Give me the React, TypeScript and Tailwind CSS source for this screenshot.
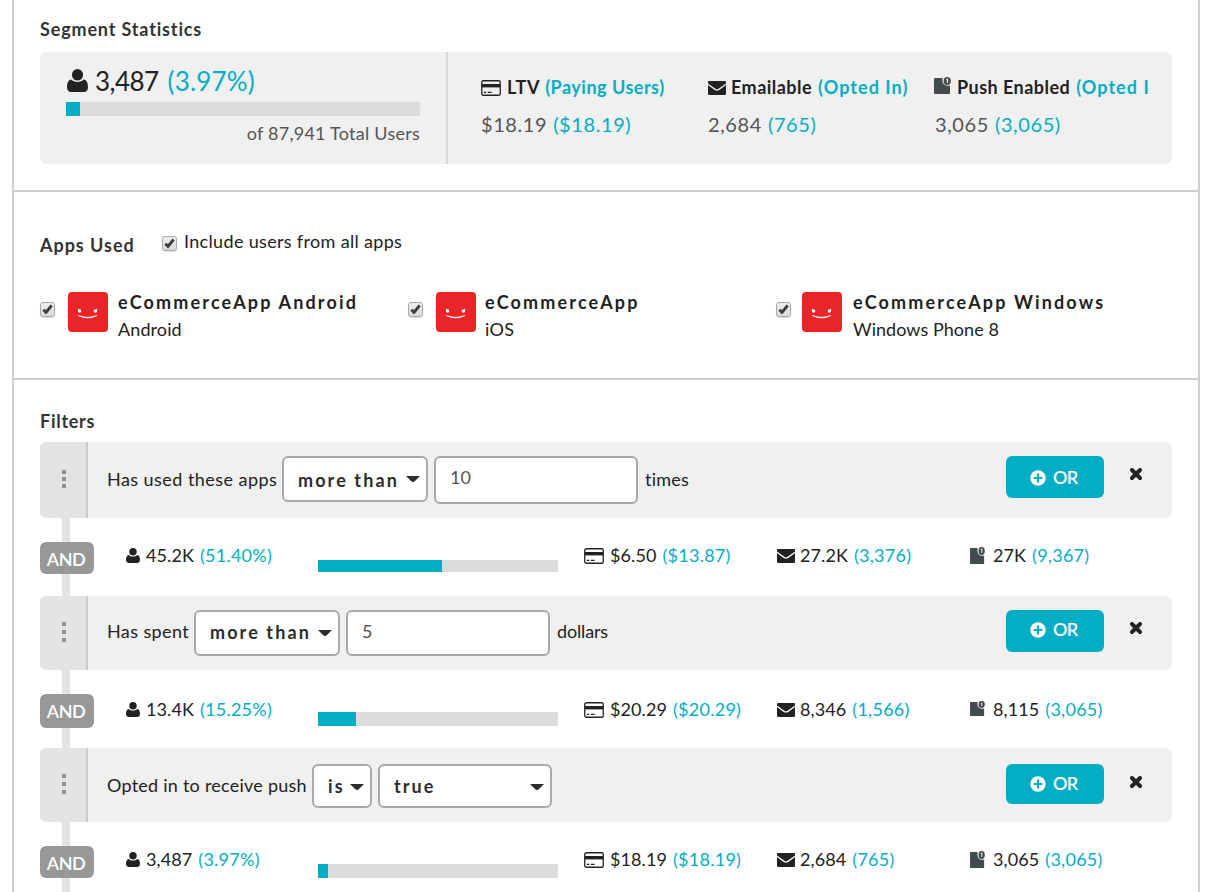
type IconProps = { className?: string };

function UserIcon({ className = "" }: IconProps) {
  return (
    <svg className={className} viewBox="0 0 21 23" preserveAspectRatio="none" fill="#222">
      <path d="M4.200 10.600C2 10.600 0 13.400 0 18.200 0 21.400 1.600 23 4.200 23H16.800C19.400 23 21 21.400 21 18.200 21 13.400 19 10.600 16.800 10.600 15.300 12.100 13 13 10.500 13S5.700 12.100 4.200 10.600Z" />
      <ellipse cx="10.5" cy="5.8" rx="5.6" ry="5.8" />
    </svg>
  );
}

function CardIcon({ className = "" }: IconProps) {
  return (
    <svg className={className} viewBox="0 0 20 16" preserveAspectRatio="none">
      <rect x="0.75" y="0.75" width="18.5" height="14.5" rx="1.6" fill="none" stroke="#222" strokeWidth="1.3" />
      <rect x="1" y="4" width="18" height="3.4" fill="#222" />
      <path d="M2.800 12.400H5.200M6.800 12.400H10.600" stroke="#222" strokeWidth="1.200" />
    </svg>
  );
}

function MailIcon({ className = "" }: IconProps) {
  return (
    <svg className={className} viewBox="0 0 18 14" preserveAspectRatio="none" fill="#222">
      <path d="M1 0H17Q18 0 18 1V2.500L10.600 7.700Q9 8.700 7.400 7.700L0 2.500V1Q0 0 1 0Z" />
      <path d="M0 4.100 6.700 8.900Q9 10.300 11.300 8.900L18 4.100V12.500Q18 14 16.500 14H1.500Q0 14 0 12.500Z" />
    </svg>
  );
}

function PushIcon({ className = "" }: IconProps) {
  return (
    <svg className={className} viewBox="0 0 17 17" preserveAspectRatio="none">
      <path d="M1 1H8.600Q7.600 6 10.800 7.900 13.200 9.200 16 8.400V16Q16 17 15 17H1Q0 17 0 16V2Q0 1 1 1Z" fill="#434b4d" />
      <ellipse cx="13.200" cy="4" rx="3.600" ry="3.900" fill="#434b4d" />
      <path d="M12.300 2.900 13.400 2.200V5.900" fill="none" stroke="#f4f4f4" strokeWidth="1.100" />
    </svg>
  );
}

function PlusIcon({ className = "" }: IconProps) {
  return (
    <svg className={className} viewBox="0 0 16 16">
      <circle cx="8" cy="8" r="7.700" fill="#fff" />
      <path d="M8 3.600V12.400M3.600 8H12.400" stroke="#03aec4" strokeWidth="2.200" />
    </svg>
  );
}

function CloseIcon({ className = "" }: IconProps) {
  return (
    <svg className={className} viewBox="0 0 12 12">
      <path d="M2 2 10 10M10 2 2 10" stroke="#222" strokeWidth="3.900" strokeLinecap="round" />
    </svg>
  );
}

function Caret({ className = "" }: IconProps) {
  return (
    <svg className={className} viewBox="0 0 14 6" width="14" height="6">
      <path d="M0 0H14L9 5Q7 6.800 5 5Z" fill="#2d2d2d" />
    </svg>
  );
}

function AppLogo() {
  return (
    <svg className="h-10 w-10 shrink-0 rounded bg-[#e9252a]" viewBox="0 0 40 40">
      <circle cx="11.600" cy="19" r="1.700" fill="#fff" />
      <circle cx="27.400" cy="19" r="1.700" fill="#fff" />
      <path d="M10 23.400Q19.500 27 29 23.400 20 28.600 10 23.400Z" fill="#fff" stroke="#fff" strokeWidth="0.600" />
      <path d="M10.300 16.800 10.600 20M28.700 16.800 28.400 20" stroke="#fff" strokeWidth="0.900" />
    </svg>
  );
}

function Checkbox() {
  return (
    <span className="flex h-[15px] w-[15px] shrink-0 items-center justify-center rounded-[3px] border border-[#a9a9a9] bg-linear-to-b from-[#ededed] to-[#dadada] shadow-[0_1px_1px_rgba(0,0,0,0.12)]">
      <svg className="h-[11px] w-[11px]" viewBox="0 0 11 11">
        <path d="M1.400 5.800 4 8.400 9.600 1.500" fill="none" stroke="#3c3c3c" strokeWidth="2.900" />
      </svg>
    </span>
  );
}

const summary = [
  {
    icon: <CardIcon className="mt-[5px] mr-1.5 -ml-px h-4 w-5 shrink-0" />,
    label: "LTV",
    note: "(Paying Users)",
    value: "$18.19",
    sub: "($18.19)",
    width: "w-[226px]",
    labelTracking: "tracking-[0.7px]",
    noteTracking: "ml-[5px] tracking-[0.5px]",
    valueTracking: "-ml-px tracking-[0.58px]",
  },
  {
    icon: <MailIcon className="mt-[6px] mr-[5px] h-[14px] w-[18px] shrink-0" />,
    label: "Emailable",
    note: "(Opted In)",
    value: "2,684",
    sub: "(765)",
    width: "w-[227px]",
    labelTracking: "tracking-[0.47px]",
    noteTracking: "ml-[6px] tracking-[1.05px]",
    valueTracking: "tracking-[0.6px]",
  },
  {
    icon: <PushIcon className="mt-[2px] mr-1.5 -ml-px h-[17px] w-[17px] shrink-0" />,
    label: "Push Enabled",
    note: "(Opted In)",
    value: "3,065",
    sub: "(3,065)",
    width: "w-[214px]",
    labelTracking: "tracking-[0.46px]",
    noteTracking: "ml-[6px] tracking-[1.05px]",
    valueTracking: "tracking-[0.6px]",
  },
];

const apps = [
  { name: "eCommerceApp Android", platform: "Android", width: "w-[368px]", gap: "ml-[13px]", textGap: "ml-[10px]", tracking: "tracking-[0.1px]" },
  { name: "eCommerceApp", platform: "iOS", width: "w-[368px]", gap: "ml-[13px]", textGap: "ml-[9px]", tracking: "tracking-[0.3px]" },
  { name: "eCommerceApp Windows", platform: "Windows Phone 8", width: "w-[340px]", gap: "ml-[11px]", textGap: "ml-[11px]", tracking: "tracking-[0.05px]" },
];

type Field = { kind: "select" | "input"; value: string; width: string; box: string };

type Filter = {
  height: string;
  label: string;
  labelBox: string;
  fields: Field[];
  unit?: string;
  unitBox?: string;
  button: string;
  closeTop: string;
  dots: string;
  badge: string;
  textTop: string;
  bar: string;
  percent: number;
  pushIcon: string;
  stats: [string, string][];
};

const filters: Filter[] = [
  {
    height: "h-[76px]",
    label: "Has used these apps",
    labelBox: "mt-[25px] w-[175px] tracking-[0.45px]",
    fields: [
      { kind: "select", value: "more than", width: "w-[146px]", box: "mt-[14px] h-[46px] leading-[44px]" },
      { kind: "input", value: "10", width: "w-[204px]", box: "mt-[14px] h-[48px] leading-[38px]" },
    ],
    unit: "times",
    unitBox: "mt-[25px] tracking-[0.2px]",
    button: "mt-[14px] h-[42px] pt-[2px]",
    closeTop: "mt-[26px]",
    dots: "pt-[28px] gap-[3px]",
    badge: "h-[32px]",
    textTop: "pt-[25px]",
    bar: "h-[12px]",
    percent: 51.6,
    pushIcon: "h-[17px]",
    stats: [
      ["45.2K", "(51.40%)"],
      ["$6.50", "($13.87)"],
      ["27.2K", "(3,376)"],
      ["27K", "(9,367)"],
    ],
  },
  {
    height: "h-[74px]",
    label: "Has spent",
    labelBox: "mt-[23px] w-[87px] tracking-[0.4px]",
    fields: [
      { kind: "select", value: "more than", width: "w-[146px]", box: "mt-[14px] h-[46px] leading-[40px]" },
      { kind: "input", value: "5", width: "w-[204px]", box: "mt-[14px] h-[46px] leading-[38px]" },
    ],
    unit: "dollars",
    unitBox: "mt-[23px] tracking-[-0.15px]",
    button: "mt-[14px] h-[42px]",
    closeTop: "mt-[26px]",
    dots: "pt-[26px] gap-1",
    badge: "h-[34px]",
    textTop: "pt-[27px]",
    bar: "h-[14px]",
    percent: 15.8,
    pushIcon: "h-[15px]",
    stats: [
      ["13.4K", "(15.25%)"],
      ["$20.29", "($20.29)"],
      ["8,346", "(1,566)"],
      ["8,115", "(3,065)"],
    ],
  },
  {
    height: "h-[74px]",
    label: "Opted in to receive push",
    labelBox: "mt-[25px] w-[205px] tracking-[0.24px]",
    fields: [
      { kind: "select", value: "is", width: "w-[60px]", box: "mt-[16px] h-[44px] leading-[40px]" },
      { kind: "select", value: "true", width: "w-[174px]", box: "mt-[16px] h-[44px] leading-[40px]" },
    ],
    button: "mt-[16px] h-[40px]",
    closeTop: "mt-[28px]",
    dots: "pt-[26px] gap-1",
    badge: "h-[32px]",
    textTop: "pt-[25px]",
    bar: "h-[14px]",
    percent: 4.2,
    pushIcon: "h-[17px]",
    stats: [
      ["3,487", "(3.97%)"],
      ["$18.19", "($18.19)"],
      ["2,684", "(765)"],
      ["3,065", "(3,065)"],
    ],
  },
];

function Stat({ pair }: { pair: [string, string] }) {
  return (
    <>
      <span className="tracking-[0.1px]">{pair[0]}</span>
      <span className="ml-[6px] tracking-[0.25px] text-[#03aec4]">{pair[1]}</span>
    </>
  );
}

function FilterBlock({ filter }: { filter: Filter }) {
  return (
    <>
      <div className={`flex overflow-hidden rounded-md bg-[#f0f0f0] ${filter.height}`}>
        <div className={`flex w-12 shrink-0 flex-col border-r-2 border-[#cdcdcd] bg-[#e3e3e3] pl-[22px] ${filter.dots}`}>
          <span className="h-1 w-1 bg-[#919191]" />
          <span className="h-1 w-1 bg-[#919191]" />
          <span className="h-1 w-1 bg-[#919191]" />
        </div>
        <div className="flex grow items-start pl-[19px]">
          <span className={`leading-6 ${filter.labelBox}`}>{filter.label}</span>
          <div className="flex items-start gap-1.5">
            {filter.fields.map((f) =>
              f.kind === "select" ? (
                <div
                  key={f.value}
                  className={`flex items-start justify-between rounded-md border-2 border-[#a9a9a9] bg-white pr-[6px] pl-[14px] font-bold tracking-[2.1px] text-[#2d2d2d] ${f.width} ${f.box}`}
                >
                  {f.value}
                  <Caret className="mt-[18px] -ml-2 shrink-0" />
                </div>
              ) : (
                <div key={f.value} className={`rounded-md border-2 border-[#a9a9a9] bg-white pl-[14px] text-[#555] ${f.width} ${f.box}`}>
                  {f.value}
                </div>
              ),
            )}
          </div>
          {filter.unit && <span className={`ml-[7px] leading-6 ${filter.unitBox}`}>{filter.unit}</span>}
        </div>
        <button className={`flex w-[98px] shrink-0 items-start rounded-md bg-[#03aec4] pl-6 leading-[38px] font-semibold tracking-[-0.8px] text-white ${filter.button}`}>
          <PlusIcon className="mt-[12px] mr-[7px] h-4 w-4" />
          OR
        </button>
        <CloseIcon className={`mr-[30px] ml-[26px] h-3 w-3 shrink-0 ${filter.closeTop}`} />
      </div>

      <div className="flex h-[78px] items-start">
        <div className="flex h-full w-[54px] shrink-0 flex-col items-start">
          <span className="ml-[22px] h-6 w-2 bg-[#e3e3e3]" />
          <span className={`w-[54px] rounded-md bg-[#989898] pt-[2px] pr-[2px] text-center leading-[30px] font-semibold tracking-[-0.5px] text-white ${filter.badge}`}>AND</span>
          <span className="ml-[22px] w-2 grow bg-[#e3e3e3]" />
        </div>
        <div className={`ml-8 flex w-[192px] shrink-0 leading-6 ${filter.textTop}`}>
          <UserIcon className="mt-[5px] mr-[6px] h-[15px] w-[14px] shrink-0" />
          <Stat pair={filter.stats[0]} />
        </div>
        <div className={`mt-[42px] w-[240px] shrink-0 bg-[#dcdcdc] ${filter.bar}`}>
          <div className="h-full bg-[#03aec4]" style={{ width: `${filter.percent}%` }} />
        </div>
        <div className={`ml-[26px] flex leading-6 ${filter.textTop}`}>
          <div className="flex w-[193px]">
            <CardIcon className="mt-[5px] mr-[6px] h-4 w-5 shrink-0" />
            <Stat pair={filter.stats[1]} />
          </div>
          <div className="flex w-[193px]">
            <MailIcon className="mt-[6px] mr-[5px] h-[14px] w-[18px] shrink-0" />
            <Stat pair={filter.stats[2]} />
          </div>
          <div className="flex">
            <PushIcon className={`mt-[4px] mr-[8px] w-[15px] shrink-0 ${filter.pushIcon}`} />
            <Stat pair={filter.stats[3]} />
          </div>
        </div>
      </div>
    </>
  );
}

export default function App() {
  return (
    <div className="h-[892px] w-[1214px] overflow-hidden bg-white pl-3 font-['Lato',sans-serif] text-[18px] whitespace-nowrap text-[#222]">
      <main className="h-[920px] w-[1188px] border-x-2 border-[#cfcfcf]">
        <section className="h-[192px] border-b-2 border-[#cfcfcf] px-[26px] pt-[17px]">
          <h2 className="leading-6 font-bold tracking-[0.84px] text-[#333]">Segment Statistics</h2>
          <div className="mt-[11px] flex h-[112px] rounded-md bg-[#f0f0f0]">
            <div className="w-[408px] shrink-0 border-r-2 border-[#d8d8d8] pt-[13px] pr-[26px] pl-[26px]">
              <div className="flex text-[26px] leading-8">
                <UserIcon className="mt-[4px] mr-[7px] ml-px h-[23px] w-[21px]" />
                <span className="tracking-[-0.55px]">3,487</span>
                <span className="ml-[9px] tracking-[0.2px] text-[#03aec4]">(3.97%)</span>
              </div>
              <div className="mt-[5px] h-[14px] w-[354px] bg-[#dcdcdc]">
                <div className="h-full w-[14px] bg-[#03aec4]" />
              </div>
              <p className="mt-[5px] text-right leading-6 tracking-[0.25px] text-[#555]">of 87,941 Total Users</p>
            </div>
            <div className="flex pt-[23px] pl-[34px]">
              {summary.map((s) => (
                <div key={s.label} className={`-ml-px shrink-0 overflow-hidden pl-px leading-6 ${s.width} box-content`}>
                  <div className="flex font-bold">
                    {s.icon}
                    <span className={s.labelTracking}>{s.label}</span>
                    <span className={`text-[#03aec4] ${s.noteTracking}`}>{s.note}</span>
                  </div>
                  <div className={`mt-[13px] text-[20px] text-[#555] ${s.valueTracking}`}>
                    {s.value}
                    <span className="ml-[6px] text-[#03aec4]">{s.sub}</span>
                  </div>
                </div>
              ))}
            </div>
          </div>
        </section>

        <section className="h-[188px] border-b-2 border-[#cfcfcf] pt-[37px] pl-[26px]">
          <div className="flex items-start leading-6">
            <h2 className="mt-1 w-[122px] font-bold tracking-[0.97px] text-[#333]">Apps Used</h2>
            <div className="mt-[7px]">
              <Checkbox />
            </div>
            <span className="ml-[7px] tracking-[0.33px]">Include users from all apps</span>
          </div>
          <div className="mt-[30px] flex">
            {apps.map((a) => (
              <div key={a.name} className={`flex shrink-0 items-start ${a.width}`}>
                <div className="mt-[15px]">
                  <Checkbox />
                </div>
                <div className={`mt-[5px] ${a.gap}`}>
                  <AppLogo />
                </div>
                <div className={a.textGap}>
                  <div className="mt-px leading-7 font-bold tracking-[2.15px]">{a.name}</div>
                  <div className={`mt-px leading-6 ${a.tracking}`}>{a.platform}</div>
                </div>
              </div>
            ))}
          </div>
        </section>

        <section className="px-[26px] pt-[29px]">
          <h2 className="mb-[9px] leading-6 font-bold tracking-[0.73px] text-[#333]">Filters</h2>
          {filters.map((f) => (
            <FilterBlock key={f.label} filter={f} />
          ))}
        </section>
      </main>
    </div>
  );
}
